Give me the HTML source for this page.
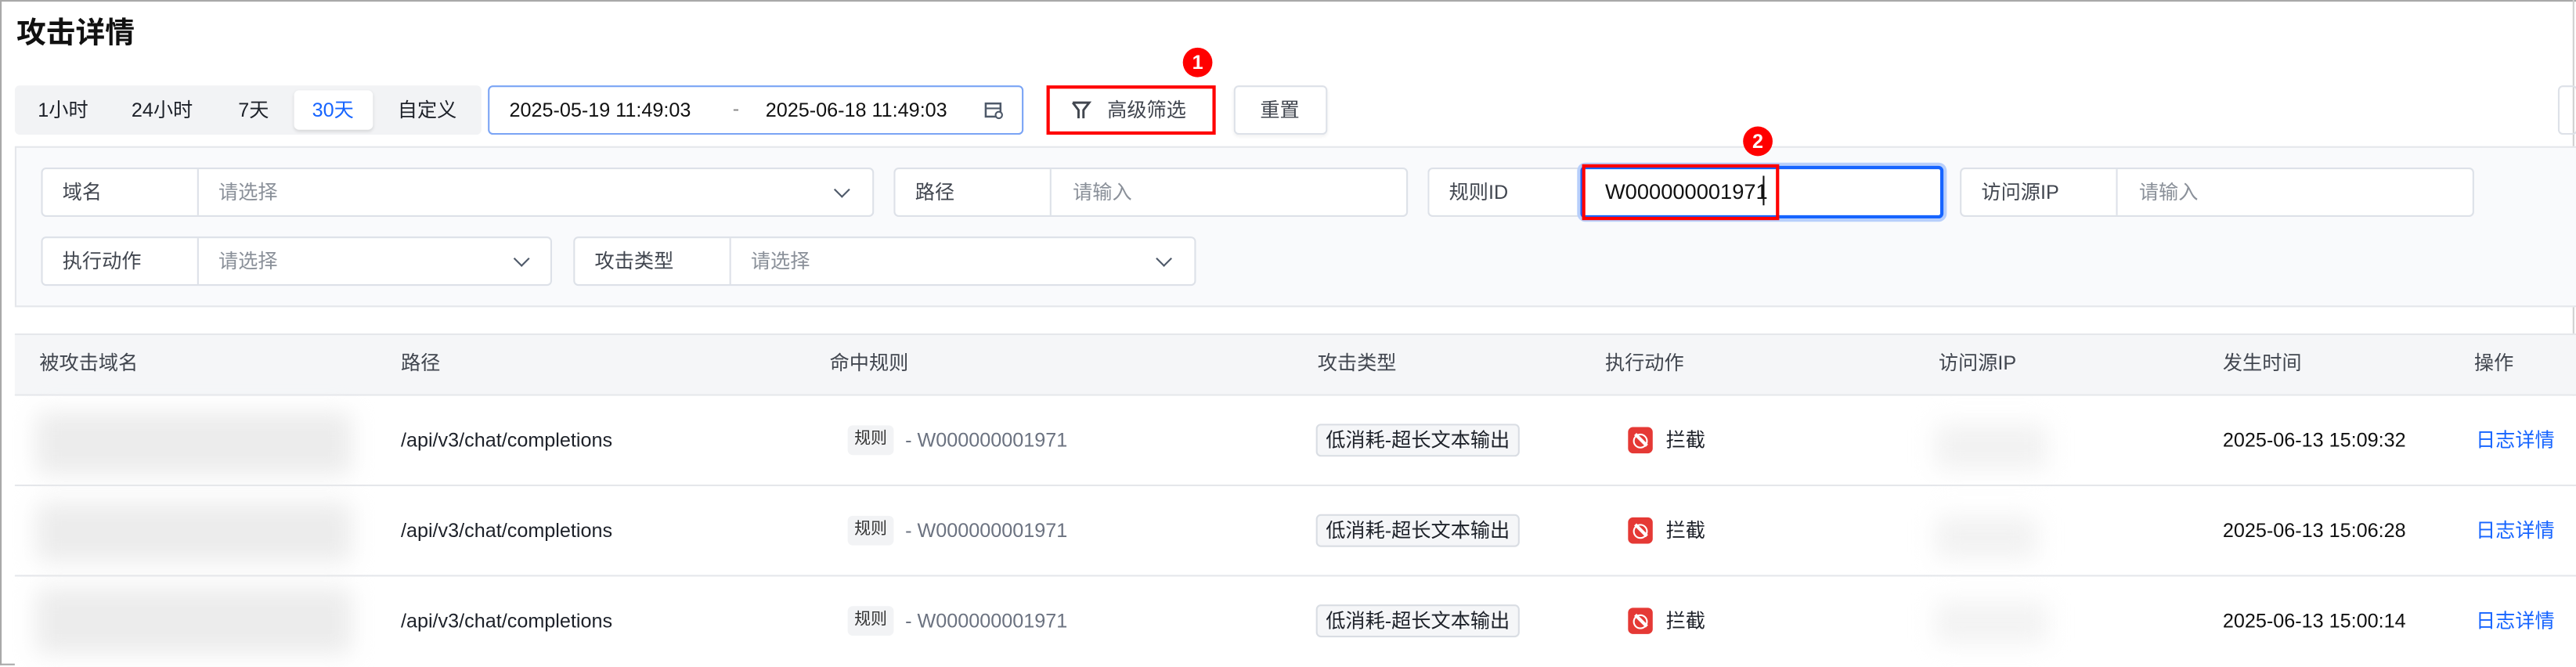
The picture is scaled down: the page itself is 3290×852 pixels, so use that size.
<!DOCTYPE html>
<html><head><meta charset="utf-8"><style>
*{box-sizing:border-box;margin:0;padding:0}
html,body{width:3290px;height:850px;overflow:hidden;background:#fff}
#s{position:absolute;left:0;top:0;width:1568px;height:405px;transform:scale(2.0982);transform-origin:0 0;font-family:"Liberation Sans","Noto Sans CJK SC",sans-serif;font-size:12px;color:#1d2129}
.a{position:absolute}
.t{position:absolute;white-space:nowrap;line-height:1}
.field{position:absolute;height:30px;border:1px solid #dde1e8;border-radius:3px;background:#fff}
.field .lb{position:absolute;left:0;top:0;height:28px;border-right:1px solid #dde1e8;padding-left:12px;line-height:28px;color:#41464f}
.field .ph{position:absolute;top:0;line-height:28px;color:#8a9099}
.chev{position:absolute;top:9px;width:7px;height:7px;border-right:1.5px solid #4e5969;border-bottom:1.5px solid #4e5969;transform:rotate(45deg)}
.badge{position:absolute;width:18px;height:18px;border-radius:50%;background:#f00;color:#fff;font-weight:bold;font-size:12px;text-align:center;line-height:18px}
.row{position:absolute;left:9px;width:1559px;height:55px;border-bottom:1px solid #e5e7eb;background:#fff}
.blur{position:absolute;background:#ececec;filter:blur(7px);border-radius:4px}
.tag{position:absolute;font-size:10px;background:#f2f3f5;border-radius:3px;height:18px;line-height:18px;padding:0 4px;color:#333}
.ty{position:absolute;border:1px solid #d9dde3;background:#f5f6f8;border-radius:3px;height:20px;line-height:18px;padding:0 5px;font-size:12px;color:#1d2129}
.blk{position:absolute;width:15px;height:16px;border-radius:3px;background:#e53935}
.blk:after{content:"";position:absolute;left:3px;top:3.5px;width:7px;height:7px;border:1.5px solid #fff;border-radius:50%}
.blk:before{content:"";position:absolute;left:7px;top:3px;width:1.5px;height:10px;background:#fff;transform:rotate(-45deg)}
</style></head><body><div id="s">
<div class="a" style="left:0;top:0;width:1568px;height:405px;border:1px solid #a9a9a9;border-right:none"></div>
<div class="a" style="left:1566px;top:0;width:1px;height:405px;background:#d0d0d0"></div>
<div class="t" style="left:10px;top:11px;font-size:18px;font-weight:bold;color:#111">攻击详情</div>

<div class="a" style="left:9px;top:52px;width:284px;height:30px;background:#f2f3f5;border-radius:3px"></div>
<div class="t" style="left:23px;top:61px">1小时</div>
<div class="t" style="left:80px;top:61px">24小时</div>
<div class="t" style="left:145px;top:61px">7天</div>
<div class="a" style="left:179px;top:55px;width:48px;height:24px;background:#fff;border-radius:3px;box-shadow:0 1px 2px rgba(0,0,0,.12)"></div>
<div class="t" style="left:190px;top:61px;color:#1664ff">30天</div>
<div class="t" style="left:242px;top:61px">自定义</div>

<div class="a" style="left:297px;top:52px;width:326px;height:30px;border:1px solid #7aa4f5;border-radius:3px"></div>
<div class="t" style="left:310px;top:61px;color:#111">2025-05-19 11:49:03</div>
<div class="t" style="left:446px;top:60px;color:#888">-</div>
<div class="t" style="left:466px;top:61px;color:#111">2025-06-18 11:49:03</div>
<svg class="a" style="left:599px;top:61px" width="12" height="12" viewBox="0 0 12 12"><rect x="1" y="2" width="9" height="8" fill="none" stroke="#4e5969" stroke-width="1.2"/><line x1="1" y1="5" x2="10" y2="5" stroke="#4e5969"/><circle cx="9" cy="9" r="2" fill="#fff" stroke="#4e5969"/></svg>

<div class="a" style="left:637px;top:52px;width:103px;height:30px;border:2px solid #f00;background:#fff"></div>
<svg class="a" style="left:651px;top:60px" width="14" height="14" viewBox="0 0 14 14"><path d="M2 2.5H12L8.5 7V12M5.5 12V7L2 2.5" fill="none" stroke="#41464f" stroke-width="1.4"/></svg>
<div class="t" style="left:674px;top:61px;color:#41464f">高级筛选</div>
<div class="badge" style="left:720px;top:29px">1</div>
<div class="a" style="left:751px;top:52px;width:57px;height:30px;border:1px solid #dde1e8;border-radius:3px;box-shadow:0 1px 2px rgba(0,0,0,.06)"></div>
<div class="t" style="left:767px;top:61px;color:#41464f">重置</div>
<div class="a" style="left:1557px;top:52px;width:12px;height:30px;border:1px solid #dde1e8;border-radius:3px"></div>

<div class="a" style="left:9px;top:89px;width:1560px;height:98px;background:#f9fafc;border:1px solid #e5e7eb"></div>
<div class="field" style="left:25px;top:102px;width:507px"><div class="lb" style="width:95px">域名</div><div class="ph" style="left:107px">请选择</div><div class="chev" style="left:483px"></div></div>
<div class="field" style="left:544px;top:102px;width:313px"><div class="lb" style="width:95px">路径</div><div class="ph" style="left:108px">请输入</div></div>
<div class="field" style="left:869px;top:102px;width:100px;border-right:none"><div class="lb" style="width:95px;border-right:none">规则ID</div></div>
<div class="a" style="left:962px;top:101px;width:221px;height:32px;border:2px solid #1664ff;border-radius:3px;background:#fff;box-shadow:0 0 0 2px #b8cffb"></div>
<div class="a" style="left:963px;top:100px;width:120px;height:34px;border:2px solid #f00"></div>
<div class="t" style="left:977px;top:110px;font-size:13px;color:#111">W000000001971</div>
<div class="a" style="left:1073px;top:107px;width:1px;height:18px;background:#111"></div>
<div class="badge" style="left:1061px;top:77px">2</div>
<div class="field" style="left:1193px;top:102px;width:313px"><div class="lb" style="width:95px">访问源IP</div><div class="ph" style="left:108px">请输入</div></div>
<div class="field" style="left:25px;top:144px;width:311px"><div class="lb" style="width:95px">执行动作</div><div class="ph" style="left:107px">请选择</div><div class="chev" style="left:288px"></div></div>
<div class="field" style="left:349px;top:144px;width:379px"><div class="lb" style="width:95px">攻击类型</div><div class="ph" style="left:107px">请选择</div><div class="chev" style="left:355px"></div></div>

<div class="a" style="left:9px;top:203px;width:1559px;height:38px;background:#f5f6f8;border-top:1px solid #e5e7eb;border-bottom:1px solid #e5e7eb"></div>
<div class="t" style="left:24px;top:215px;color:#41464f">被攻击域名</div>
<div class="t" style="left:244px;top:215px;color:#41464f">路径</div>
<div class="t" style="left:505px;top:215px;color:#41464f">命中规则</div>
<div class="t" style="left:802px;top:215px;color:#41464f">攻击类型</div>
<div class="t" style="left:977px;top:215px;color:#41464f">执行动作</div>
<div class="t" style="left:1180px;top:215px;color:#41464f">访问源IP</div>
<div class="t" style="left:1353px;top:215px;color:#41464f">发生时间</div>
<div class="t" style="left:1506px;top:215px;color:#41464f">操作</div>

<div class="row" style="top:241px"></div>
<div class="row" style="top:296px"></div>
<div class="row" style="top:351px;border-bottom:none"></div>

<div class="blur" style="left:22px;top:251px;width:192px;height:38px"></div>
<div class="blur" style="left:22px;top:306px;width:192px;height:36px"></div>
<div class="blur" style="left:22px;top:358px;width:192px;height:40px"></div>
<div class="blur" style="left:1178px;top:258px;width:68px;height:28px;background:#f2f2f2"></div>
<div class="blur" style="left:1178px;top:314px;width:62px;height:26px;background:#f2f2f2"></div>
<div class="blur" style="left:1178px;top:366px;width:68px;height:26px;background:#f3f3f3"></div>

<div class="t" style="left:244px;top:262px">/api/v3/chat/completions</div>
<div class="t" style="left:244px;top:317px">/api/v3/chat/completions</div>
<div class="t" style="left:244px;top:372px">/api/v3/chat/completions</div>

<div class="tag" style="left:516px;top:259px">规则</div><div class="t" style="left:551px;top:262px;color:#6b7280">- W000000001971</div>
<div class="tag" style="left:516px;top:314px">规则</div><div class="t" style="left:551px;top:317px;color:#6b7280">- W000000001971</div>
<div class="tag" style="left:516px;top:369px">规则</div><div class="t" style="left:551px;top:372px;color:#6b7280">- W000000001971</div>

<div class="ty" style="left:801px;top:258px">低消耗-超长文本输出</div>
<div class="ty" style="left:801px;top:313px">低消耗-超长文本输出</div>
<div class="ty" style="left:801px;top:368px">低消耗-超长文本输出</div>

<div class="blk" style="left:991px;top:260px"></div><div class="t" style="left:1014px;top:262px">拦截</div>
<div class="blk" style="left:991px;top:315px"></div><div class="t" style="left:1014px;top:317px">拦截</div>
<div class="blk" style="left:991px;top:370px"></div><div class="t" style="left:1014px;top:372px">拦截</div>

<div class="t" style="left:1353px;top:262px;color:#111">2025-06-13 15:09:32</div>
<div class="t" style="left:1353px;top:317px;color:#111">2025-06-13 15:06:28</div>
<div class="t" style="left:1353px;top:372px;color:#111">2025-06-13 15:00:14</div>

<div class="t" style="left:1507px;top:262px;color:#1664ff">日志详情</div>
<div class="t" style="left:1507px;top:317px;color:#1664ff">日志详情</div>
<div class="t" style="left:1507px;top:372px;color:#1664ff">日志详情</div>
</div></body></html>
